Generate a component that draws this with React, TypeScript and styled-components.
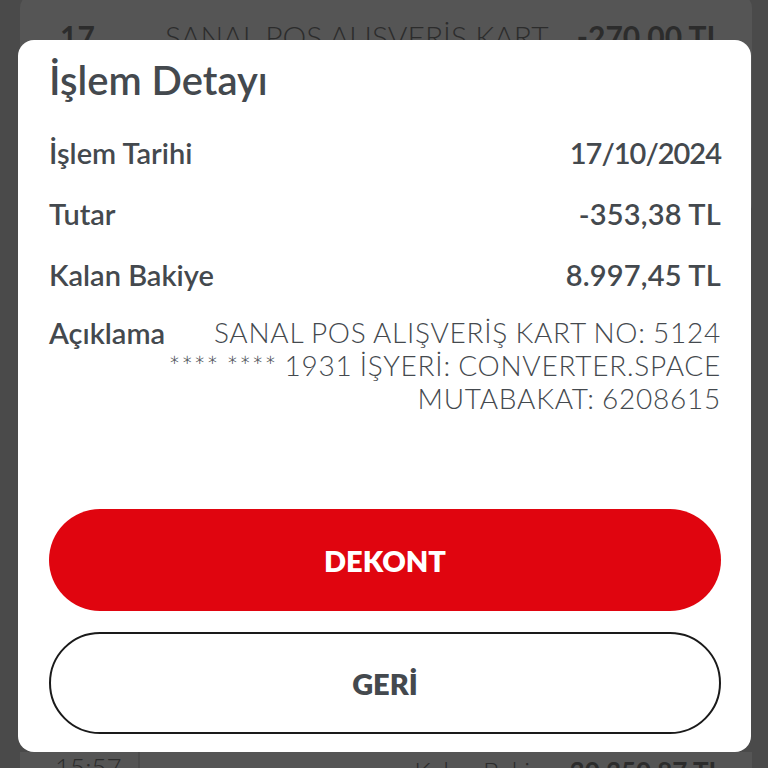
import styled, { createGlobalStyle } from "styled-components";

interface DetailRow {
  label: string;
  value: string;
  spacing: number;
}

const details: DetailRow[] = [
  { label: "İşlem Tarihi", value: "17/10/2024", spacing: -1 },
  { label: "Tutar", value: "-353,38 TL", spacing: 0.2 },
  { label: "Kalan Bakiye", value: "8.997,45 TL", spacing: 0.2 },
];

const descriptionLines = [
  "SANAL POS ALIŞVERİŞ KART NO: 5124",
  "**** **** 1931 İŞYERİ: CONVERTER.SPACE",
  "MUTABAKAT: 6208615",
];

function App() {
  return (
    <>
      <GlobalStyle />
      <Screen>
        <TopCard>
          <DateCol>17</DateCol>
          <CardTitle>SANAL POS ALIŞVERİŞ KART</CardTitle>
          <CardAmount>-270,00 TL</CardAmount>
        </TopCard>
        <BottomCard>
          <TimeCol>15:57</TimeCol>
          <BalanceText>
            Kalan Bakiye: <strong>30.350,87 TL</strong>
          </BalanceText>
        </BottomCard>
      </Screen>
      <Modal>
        <Title>İşlem Detayı</Title>
        {details.map((row) => (
          <Row key={row.label}>
            <Label>{row.label}</Label>
            <Value $spacing={row.spacing}>{row.value}</Value>
          </Row>
        ))}
        <DescRow>
          <Label>Açıklama</Label>
          <Description>
            {descriptionLines.map((line) => (
              <div key={line}>{line}</div>
            ))}
          </Description>
        </DescRow>
        <Buttons>
          <PillButton $primary>DEKONT</PillButton>
          <PillButton>GERİ</PillButton>
        </Buttons>
      </Modal>
    </>
  );
}

export default App;

const GlobalStyle = createGlobalStyle`
  html, body {
    margin: 0;
    padding: 0;
  }
  body {
    font-family: Lato, "Open Sans", sans-serif;
    background: #484848;
  }
  #root {
    position: relative;
    width: 768px;
    height: 768px;
    overflow: hidden;
  }
`;

const Screen = styled.div`
  height: 768px;
  box-sizing: border-box;
  padding: 0 16px 0 20px;
  display: flex;
  flex-direction: column;
  justify-content: space-between;
  background: #4a4a4a;
`;

const TopCard = styled.div`
  height: 200px;
  margin-top: -6px;
  background: #555555;
  border-radius: 14px;
  display: flex;
  align-items: flex-start;
  padding: 24px 30px 0 40px;
  color: #2c2c2c;
  font-size: 30px;
`;

const DateCol = styled.div`
  width: 105px;
  font-weight: 700;
`;

const CardTitle = styled.div`
  flex: 1;
  font-weight: 300;
`;

const CardAmount = styled.div`
  font-weight: 700;
`;

const BottomCard = styled.div`
  height: 60px;
  margin-bottom: -44px;
  background: #555555;
  display: flex;
  color: #2c2c2c;
  font-size: 26px;
`;

const TimeCol = styled.div`
  width: 120px;
  box-sizing: border-box;
  padding: 0 0 0 35px;
  border-right: 2px solid #4c4c4c;
  font-weight: 300;
  line-height: 30px;
`;

const BalanceText = styled.div`
  flex: 1;
  text-align: right;
  padding: 4px 30px 0 0;
  font-weight: 300;
  line-height: 30px;

  strong {
    font-weight: 700;
  }
`;

const Modal = styled.div`
  position: absolute;
  left: 18px;
  top: 40px;
  width: 733px;
  height: 712px;
  box-sizing: border-box;
  background: #ffffff;
  border-radius: 16px;
  padding: 16px 30px 18px 31px;
  display: flex;
  flex-direction: column;
  color: #44494e;
`;

const Title = styled.h1`
  margin: 0 0 18px;
  font-size: 40px;
  line-height: 48px;
  font-weight: 600;
`;

const Row = styled.div`
  display: flex;
  justify-content: space-between;
  align-items: center;
  height: 61px;
  font-size: 29px;
`;

const Label = styled.div`
  font-weight: 600;
  line-height: 33px;
`;

const Value = styled.div<{ $spacing: number }>`
  font-weight: 600;
  line-height: 33px;
  letter-spacing: ${(p) => p.$spacing}px;
`;

const DescRow = styled.div`
  display: flex;
  justify-content: space-between;
  align-items: flex-start;
  padding-top: 11px;
  font-size: 29px;
`;

const Description = styled.div`
  text-align: right;
  font-size: 28px;
  font-weight: 300;
  line-height: 33px;
  letter-spacing: 0.75px;
  word-spacing: -1px;
`;

const Buttons = styled.div`
  margin-top: auto;
  display: flex;
  flex-direction: column;
  gap: 21px;
`;

const PillButton = styled.button<{ $primary?: boolean }>`
  height: 102px;
  border-radius: 51px;
  font-family: inherit;
  font-size: 29px;
  font-weight: 800;
  cursor: pointer;
  background: ${(p) => (p.$primary ? "#e0050f" : "#ffffff")};
  color: ${(p) => (p.$primary ? "#ffffff" : "#44494e")};
  border: ${(p) => (p.$primary ? "none" : "2px solid #1a1a1a")};
`;
